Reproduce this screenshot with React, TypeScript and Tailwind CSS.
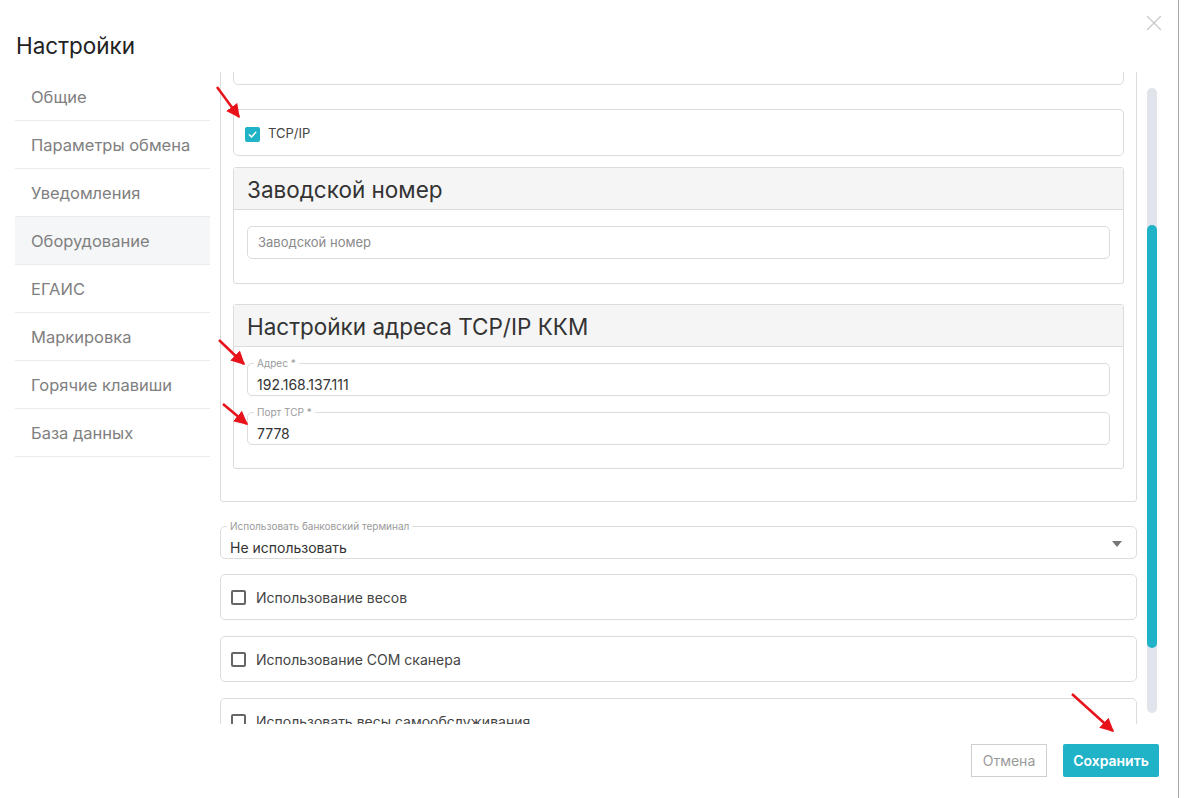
import { X } from 'lucide-react'

const menu = ['Общие', 'Параметры обмена', 'Уведомления', 'Оборудование', 'ЕГАИС', 'Маркировка', 'Горячие клавиши', 'База данных']

const Check = ({ checked }: { checked?: boolean }) =>
    checked ? (
        <span className="w-[15px] h-[15px] rounded-[2px] bg-[#20b2c7] flex items-center justify-center shrink-0">
            <svg width="11" height="11" viewBox="0 0 12 12" fill="none">
                <path d="M2.5 6.2 5 8.6 9.6 3.6" stroke="white" strokeWidth="1.6" strokeLinecap="round" strokeLinejoin="round" />
            </svg>
        </span>
    ) : (
        <span className="w-[15px] h-[15px] rounded-[2px] border-2 border-[#666] shrink-0" />
    )

const Outlined = ({ label, value, caret }: { label: string; value: string; caret?: boolean }) => (
    <div className="relative h-[33px] border border-[#dcdcdc] rounded-[5px] flex items-center pl-[9px] pr-[14px] pt-[10px]">
        <span className="absolute -top-[6px] left-[6px] bg-white px-[3px] text-[10px] leading-[10px] text-[#9a9a9a]">{label}</span>
        <span className="text-[14px] leading-[20px] text-[#333]">{value}</span>
        {caret && (
            <svg className="ml-auto -mt-[8px]" width="10" height="6" viewBox="0 0 10 6">
                <path d="M0 0h10L5 6z" fill="#777" />
            </svg>
        )}
    </div>
)

const Panel = ({ title, children, className }: { title: string; children: React.ReactNode; className?: string }) => (
    <div className={'border border-[#dcdcdc] rounded-[3px] ' + (className ?? '')}>
        <div className="h-[42px] bg-[#f5f5f5] border-b border-[#dcdcdc] flex items-center pl-[13px] pt-[3px] text-[22.5px] text-[#333]">{title}</div>
        {children}
    </div>
)

const CheckRow = ({ text, className }: { text: string; className?: string }) => (
    <div className={'h-[46px] shrink-0 border border-[#dcdcdc] rounded-[5px] flex items-center pl-[10px] pt-[1px] gap-[10px] text-[14px] text-[#444] ' + (className ?? '')}>
        <Check />
        {text}
    </div>
)

export default function App() {
    return (
        <div className="relative w-[1184px] h-[798px] bg-white overflow-hidden font-['Inter','Roboto',sans-serif]">
            <div className="w-[1179px] h-full border-r border-[#a8a8a8] flex flex-col">
                <div className="h-[72px] shrink-0 flex justify-between pl-4 pr-[11px]">
                    <h1 className="pt-[33px] text-[22.5px] leading-[26px] text-[#222]">Настройки</h1>
                    <X className="mt-[10px] text-[#c8c8c8]" size={26} strokeWidth={1.1} />
                </div>

                <div className="flex h-[652px] shrink-0">
                    <ul className="mt-[1px] ml-[15px] w-[195px] shrink-0">
                        {menu.map((m) => (
                            <li
                                key={m}
                                className={'h-[48px] border-b border-[#ebebeb] flex items-center pl-4 pt-[2px] text-[16.5px] text-[#808080] ' + (m === 'Оборудование' ? 'bg-[#f5f6f7]' : '')}
                            >
                                {m}
                            </li>
                        ))}
                    </ul>

                    <div className="ml-[10px] w-[917px] overflow-hidden">
                        <div className="-mt-[30px] flex flex-col">
                            <div className="border border-[#dcdcdc] rounded-[3px] px-3 pt-3 pb-[32px] flex flex-col">
                                <div className="h-[30px] border border-[#dcdcdc] rounded-[5px]" />
                                <div className="mt-[24px] h-[47px] border border-[#dcdcdc] rounded-[5px] flex items-center pl-[11px] pt-[3px] gap-[8px] text-[13px] text-[#444]">
                                    <Check checked />
                                    TCP/IP
                                </div>
                                <Panel title="Заводской номер" className="mt-[11px]">
                                    <div className="px-[13px] pt-[16px] pb-[24px]">
                                        <div className="h-[33px] border border-[#dcdcdc] rounded-[5px] flex items-center pl-[10px] text-[13px] text-[#8a8a8a]">
                                            Заводской номер
                                        </div>
                                    </div>
                                </Panel>
                                <Panel title="Настройки адреса TCP/IP ККМ" className="mt-[20px]">
                                    <div className="px-[13px] pt-[16px] pb-[23px] flex flex-col gap-[16px]">
                                        <Outlined label="Адрес *" value="192.168.137.111" />
                                        <Outlined label="Порт TCP *" value="7778" />
                                    </div>
                                </Panel>
                            </div>
                            <div className="mt-[24px]">
                                <Outlined label="Использовать банковский терминал" value="Не использовать" caret />
                            </div>
                            <CheckRow text="Использование весов" className="mt-[15px]" />
                            <CheckRow text="Использование COM сканера" className="mt-[16px]" />
                            <CheckRow text="Использовать весы самообслуживания" className="mt-[16px]" />
                        </div>
                    </div>

                    <div className="ml-[10px] mt-[16px] w-[10px] h-[625px] rounded-full bg-[#e1e4ea] flex flex-col">
                        <div className="mt-[137px] h-[423px] rounded-full bg-[#20b2c7]" />
                    </div>
                </div>

                <div className="flex justify-end gap-[16px] pt-[20px] pr-[19px]">
                    <button className="w-[76px] h-[33px] border border-[#cfcfcf] text-[14px] text-[#9a9a9a]">Отмена</button>
                    <button className="w-[96px] h-[33px] rounded-[2px] bg-[#20b2c7] text-[14px] font-semibold text-white">Сохранить</button>
                </div>
            </div>

            <svg className="absolute inset-0 pointer-events-none" width="1184" height="798">
                <defs>
                    <marker id="ah" viewBox="0 0 10 10" refX="9" refY="5" markerWidth="5.5" markerHeight="5.5" orient="auto">
                        <path d="M0 0L10 5L0 10z" fill="#e8131a" />
                    </marker>
                </defs>
                <g stroke="#e8131a" strokeWidth="2.5" markerEnd="url(#ah)">
                    <line x1="217" y1="87" x2="239" y2="117" />
                    <line x1="219" y1="340" x2="244" y2="364" />
                    <line x1="223" y1="404" x2="247" y2="424" />
                    <line x1="1072" y1="694" x2="1113" y2="731" />
                </g>
            </svg>
        </div>
    )
}
